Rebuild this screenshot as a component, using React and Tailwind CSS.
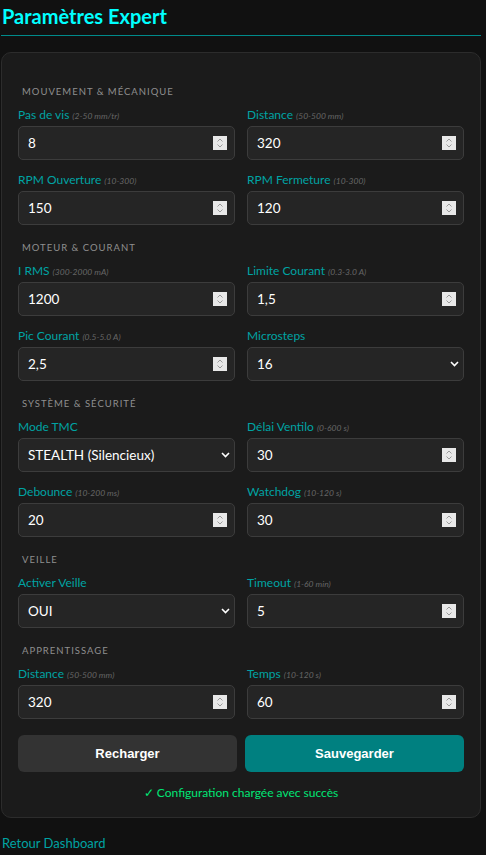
import React from 'react';

const sections = [
  {
    title: 'Mouvement & Mécanique',
    fields: [
      { label: 'Pas de vis', hint: '(2-50 mm/tr)', value: '8' },
      { label: 'Distance', hint: '(50-500 mm)', value: '320' },
      { label: 'RPM Ouverture', hint: '(10-300)', value: '150' },
      { label: 'RPM Fermeture', hint: '(10-300)', value: '120' },
    ],
  },
  {
    title: 'Moteur & Courant',
    fields: [
      { label: 'I RMS', hint: '(300-2000 mA)', value: '1200' },
      { label: 'Limite Courant', hint: '(0.3-3.0 A)', value: '1,5' },
      { label: 'Pic Courant', hint: '(0.5-5.0 A)', value: '2,5' },
      { label: 'Microsteps', value: '16', select: true },
    ],
  },
  {
    title: 'Système & Sécurité',
    fields: [
      { label: 'Mode TMC', value: 'STEALTH (Silencieux)', select: true },
      { label: 'Délai Ventilo', hint: '(0-600 s)', value: '30' },
      { label: 'Debounce', hint: '(10-200 ms)', value: '20' },
      { label: 'Watchdog', hint: '(10-120 s)', value: '30' },
    ],
  },
  {
    title: 'Veille',
    fields: [
      { label: 'Activer Veille', value: 'OUI', select: true },
      { label: 'Timeout', hint: '(1-60 min)', value: '5' },
    ],
  },
  {
    title: 'Apprentissage',
    fields: [
      { label: 'Distance', hint: '(50-500 mm)', value: '320' },
      { label: 'Temps', hint: '(10-120 s)', value: '60' },
    ],
  },
];

// native-looking number spinner, drawn since headless chrome hides it
const Spinner = () => (
  <span className="absolute right-[8px] top-1/2 -translate-y-1/2 w-[14px] h-[14px] bg-[#e8e8e8] flex items-center justify-center pointer-events-none">
    <svg width="8" height="12" viewBox="0 0 8 12" fill="none" stroke="#9a9a9a" strokeWidth="1">
      <path d="M1.5 4.5 L4 2 L6.5 4.5" />
      <path d="M1.5 7.5 L4 10 L6.5 7.5" />
    </svg>
  </span>
);

const Chevron = () => (
  <span className="absolute right-[5px] top-1/2 -translate-y-1/2 pointer-events-none">
    <svg width="9" height="6" viewBox="0 0 9 6" fill="none" stroke="#ffffff" strokeWidth="1.6">
      <path d="M1 1 L4.5 4.5 L8 1" />
    </svg>
  </span>
);

const Field = ({ label, hint, value, select }) => (
  <div className="flex flex-col">
    <label className="h-[16px] flex items-baseline text-[12px] leading-[16px] text-[#00a3a3] mb-[3px] whitespace-nowrap">
      {label}
      {hint && <span className="ml-[3px] text-[8.5px] leading-none italic text-[#666]">{hint}</span>}
    </label>
    <div className="relative">
      <div className="h-[34px] bg-[#252525] border border-[#3c3c3c] rounded-[5px] pl-[9px] flex items-center text-[13.5px] text-white">
        {value}
      </div>
      {select ? <Chevron /> : <Spinner />}
    </div>
  </div>
);

export default function App() {
  return (
    <div className="min-h-[855px] bg-[#111111] pr-[5px] font-['Lato',sans-serif]">
      <h1 className="pl-[2px] pt-[3px] text-[20px] leading-[26px] font-bold text-[#00ffff]">Paramètres Expert</h1>
      <div className="mt-[6px] ml-[1px] border-b border-[#008b8b]" />
      <div className="mt-[16px] ml-[1px] bg-[#1b1b1b] border border-[#2c2c2c] rounded-[10px] px-[16px] pt-[32px] pb-[16px]">
        {sections.map((s, i) => (
          <section key={s.title} className={i === 0 ? '' : 'mt-[16px]'}>
            <h2 className="pl-[4px] h-[14px] text-[9.5px] leading-[14px] uppercase tracking-[1px] text-[#8f8f8f] mb-[8px]">
              {s.title}
            </h2>
            <div className="grid grid-cols-2 gap-x-[12px] gap-y-[12px]">
              {s.fields.map((f, j) => (
                <Field key={j} {...f} />
              ))}
            </div>
          </section>
        ))}
        <div className="mt-[16px] grid grid-cols-2 gap-x-[8px]">
          <button className="h-[37px] rounded-[6px] bg-[#333333] text-white text-[13px] font-bold font-['Liberation_Sans',sans-serif]">
            Recharger
          </button>
          <button className="h-[37px] rounded-[6px] bg-[#008080] text-white text-[13px] font-bold font-['Liberation_Sans',sans-serif]">
            Sauvegarder
          </button>
        </div>
        <p className="mt-[13px] h-[16px] text-center text-[12px] leading-4 text-[#00e676]">✓ Configuration chargée avec succès</p>
      </div>
      <a className="block mt-[15px] pl-[2px] text-[13px] leading-5 text-[#00a3a3]">Retour Dashboard</a>
    </div>
  );
}
